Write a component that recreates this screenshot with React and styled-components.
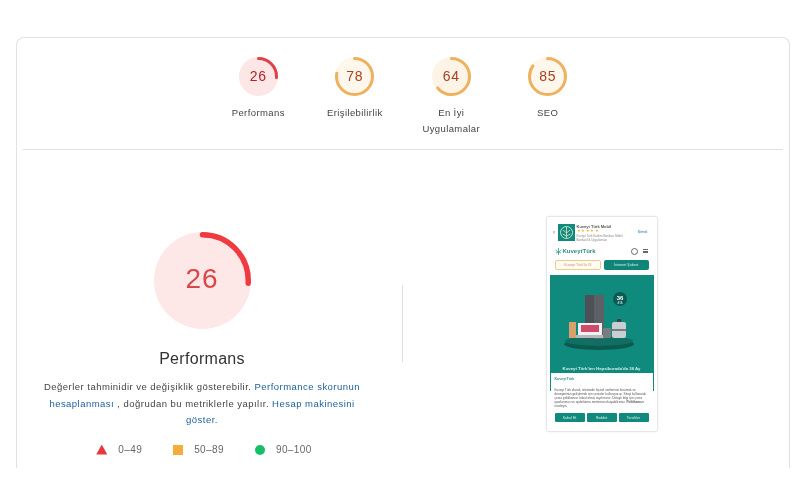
import React from 'react'
import styled, { createGlobalStyle } from 'styled-components'

const scores = [
  { value: 26, label: 'Performans', ring: '#e0404a', fill: '#fde6e6', text: '#b5232b' },
  { value: 78, label: 'Erişilebilirlik', ring: '#eeb25e', fill: '#fff6ec', text: '#a8421c' },
  { value: 64, label: 'En İyi Uygulamalar', ring: '#eeb25e', fill: '#fdf3e7', text: '#a8421c' },
  { value: 85, label: 'SEO', ring: '#eeb25e', fill: '#fff6ec', text: '#a8421c' },
]

const Gauge = ({ value, size, stroke, ring, fill }) => {
  const r = (size - stroke) / 2
  return (
    <GaugeSvg width={size} height={size} viewBox={`0 0 ${size} ${size}`}>
      <circle cx={size / 2} cy={size / 2} r={size / 2} fill={fill} />
      <circle
        cx={size / 2}
        cy={size / 2}
        r={r}
        fill="none"
        stroke={ring}
        strokeWidth={stroke}
        strokeLinecap="round"
        pathLength="100"
        strokeDasharray={`${value} 100`}
        transform={`rotate(-90 ${size / 2} ${size / 2})`}
      />
    </GaugeSvg>
  )
}

const PhonePreview = () => (
  <Phone>
    <Banner>
      <CloseMark>×</CloseMark>
      <AppIcon>
        <svg width="17" height="17" viewBox="0 0 17 17">
          <rect width="17" height="17" fill="#12897b" />
          <circle cx="8.5" cy="8.5" r="6" fill="none" stroke="#fff" strokeWidth="0.7" />
          <path d="M8.5 3v11M5 6l3.5 3 3.5-3M4.5 10l4 2 4-2" fill="none" stroke="#dfe9c8" strokeWidth="0.8" />
        </svg>
      </AppIcon>
      <BannerText>
        <AppName>Kuveyt Türk Mobil</AppName>
        <Stars>★★★★★</Stars>
        <AppNote>Kuveyt Türk Katılım Bankası Mobil Bankacılık Uygulaması</AppNote>
      </BannerText>
      <InstallLink>Şimdi</InstallLink>
    </Banner>

    <PhoneHeader>
      <Logo>
        <svg width="7" height="7" viewBox="0 0 7 7">
          <path d="M3.5 0v7M0.5 2l3 2 3-2M1 5l2.5-1L6 5" fill="none" stroke="#3a9c8e" strokeWidth="0.8" />
        </svg>
        KuveytTürk
      </Logo>
      <HeaderIcons>
        <SearchMark />
        <MenuMark />
      </HeaderIcons>
    </PhoneHeader>

    <Tabs>
      <OutlineTab>Kuveyt Türk'lü Ol</OutlineTab>
      <FilledTab>İnternet Şubesi</FilledTab>
    </Tabs>

    <Hero>
      <HeroArt>
        <svg width="104" height="89" viewBox="0 0 104 89">
          <ellipse cx="49" cy="69" rx="35" ry="6" fill="#0b5a50" />
          <ellipse cx="49" cy="66" rx="34" ry="5" fill="#116e62" />
          <rect x="35" y="20" width="19" height="44" rx="1" fill="#5d6166" />
          <rect x="35" y="20" width="9" height="44" fill="#4d5156" />
          <rect x="19" y="47" width="7" height="16" fill="#d9a06b" />
          <rect x="28" y="48" width="24" height="12" fill="#eef0f2" />
          <rect x="31" y="50" width="18" height="7" fill="#d14a6c" />
          <rect x="26" y="60" width="28" height="3" fill="#b4b9bd" />
          <rect x="53" y="53" width="8" height="10" rx="1" fill="#787d82" />
          <rect x="62" y="47" width="14" height="16" rx="2" fill="#c9ced2" />
          <rect x="62" y="54" width="14" height="2" fill="#777c80" />
          <rect x="67" y="44" width="4" height="3" fill="#3d4246" />
          <circle cx="70" cy="24" r="7" fill="#0a5c52" />
          <Badge x="70" y="25" textAnchor="middle">36</Badge>
          <BadgeNote x="70" y="28.5" textAnchor="middle">AYA</BadgeNote>
        </svg>
      </HeroArt>
      <HeroTitle>Kuveyt Türk'ten Hepsiburada'da 36 Ay</HeroTitle>
      <Notice>
        <NoticeLogo>KuveytTürk</NoticeLogo>
        <NoticeText>
          Kuveyt Türk olarak, sitemizde kişisel verilerinizi korumak ve deneyiminizi geliştirmek için
          çerezler kullanıyoruz. Siteyi kullanarak çerez politikamızı kabul etmiş sayılırsınız. Detaylı bilgi için
          çerez ayarlarımızı ve aydınlatma metnimizi okuyabilirsiniz. <b>Politikamızı</b> inceleyin.
        </NoticeText>
      </Notice>
    </Hero>

    <ActionRow>
      <ActionButton>Kabul Et</ActionButton>
      <ActionButton>Reddet</ActionButton>
      <ActionButton>Tercihler</ActionButton>
    </ActionRow>
  </Phone>
)

const App = () => (
  <>
    <GlobalStyle />
    <Page>
      <Card>
        <ScoreRow>
          {scores.map((s) => (
            <ScoreItem key={s.label}>
              <SmallGauge>
                <Gauge value={s.value} size={39} stroke={3} ring={s.ring} fill={s.fill} />
                <SmallValue $color={s.text}>{s.value}</SmallValue>
              </SmallGauge>
              <ScoreLabel>{s.label}</ScoreLabel>
            </ScoreItem>
          ))}
        </ScoreRow>
        <Rule />
        <Detail>
          <Summary>
            <BigGauge>
              <Gauge value={26} size={97} stroke={5.5} ring="#ef3b3f" fill="#fde8e7" />
              <BigValue>26</BigValue>
            </BigGauge>
            <SummaryTitle>Performans</SummaryTitle>
            <Description>
              Değerler tahminidir ve değişiklik gösterebilir. <DocLink>Performance skorunun hesaplanması</DocLink> , doğrudan bu
              metriklerle yapılır. <DocLink>Hesap makinesini göster.</DocLink>
            </Description>
            <Legend>
              <LegendItem>
                <Triangle />
                0–49
              </LegendItem>
              <LegendItem>
                <Square />
                50–89
              </LegendItem>
              <LegendItem>
                <Dot />
                90–100
              </LegendItem>
            </Legend>
          </Summary>
          <Separator />
          <PreviewColumn>
            <PhonePreview />
          </PreviewColumn>
        </Detail>
      </Card>
    </Page>
  </>
)

const GlobalStyle = createGlobalStyle`
  html, body {
    margin: 0;
    background: #fff;
  }
  body {
    font-family: "Liberation Sans", Arial, sans-serif;
    color: #333;
  }
`

const Page = styled.div`
  width: 800px;
  height: 485px;
  padding: 37px 10px 0 16px;
  box-sizing: border-box;
  overflow: hidden;
  filter: blur(0.25px);
`

const Card = styled.section`
  height: 431px;
  border: 1px solid #e2e2e2;
  border-bottom: none;
  border-radius: 8px 8px 0 0;
  overflow: hidden;
  box-sizing: border-box;
`

const ScoreRow = styled.div`
  display: flex;
  justify-content: center;
  padding-top: 19px;
  height: 92px;
`

const ScoreItem = styled.div`
  width: 96.5px;
  display: flex;
  flex-direction: column;
  align-items: center;
`

const GaugeSvg = styled.svg`
  display: block;
`

const SmallGauge = styled.div`
  position: relative;
  width: 39px;
  height: 39px;
`

const SmallValue = styled.span`
  position: absolute;
  inset: 0;
  padding-bottom: 1px;
  display: flex;
  align-items: center;
  justify-content: center;
  font-size: 14px;
  letter-spacing: 0.6px;
  color: ${(p) => p.$color};
`

const ScoreLabel = styled.div`
  margin-top: 9px;
  width: 76px;
  font-size: 9.5px;
  line-height: 16px;
  letter-spacing: 0.4px;
  text-align: center;
  color: #444;
`

const Rule = styled.div`
  height: 1px;
  margin: 0 6px;
  background: #e2e2e2;
`

const Detail = styled.div`
  display: flex;
  align-items: flex-start;
  margin: 0 6px;
`

const Summary = styled.div`
  width: 358px;
  padding-top: 82px;
  display: flex;
  flex-direction: column;
  align-items: center;
`

const BigGauge = styled.div`
  position: relative;
  width: 97px;
  height: 97px;
`

const BigValue = styled.span`
  position: absolute;
  inset: 0;
  padding-bottom: 4px;
  display: flex;
  align-items: center;
  justify-content: center;
  font-size: 28px;
  letter-spacing: 1px;
  color: #d8474a;
`

const SummaryTitle = styled.h2`
  margin: 20px 0 0;
  font-size: 16px;
  line-height: 20px;
  font-weight: 400;
  letter-spacing: 0.3px;
  color: #333;
`

const Description = styled.p`
  margin: 10px 0 0;
  width: 322px;
  font-size: 9.5px;
  line-height: 16.5px;
  letter-spacing: 0.47px;
  text-align: center;
  color: #444;
`

const DocLink = styled.span`
  color: #1a5f9c;
`

const Legend = styled.div`
  display: flex;
  gap: 31px;
  margin-top: 15px;
  padding-left: 4px;
`

const LegendItem = styled.div`
  display: flex;
  align-items: center;
  gap: 11px;
  font-size: 10px;
  line-height: 12px;
  letter-spacing: 0.4px;
  color: #666;
`

const Triangle = styled.span`
  width: 11px;
  height: 10px;
  background: #e8383c;
  clip-path: polygon(50% 0, 100% 100%, 0 100%);
`

const Square = styled.span`
  width: 10px;
  height: 10px;
  background: #f6ab3a;
`

const Dot = styled.span`
  width: 10px;
  height: 10px;
  border-radius: 50%;
  background: #16bf66;
`

const Separator = styled.div`
  width: 1px;
  height: 77px;
  margin: 135px 18px 0 21px;
  background: #e0e0e0;
`

const PreviewColumn = styled.div`
  flex: 1;
  padding: 66px 1px 0 0;
  display: flex;
  justify-content: center;
`

const Phone = styled.div`
  width: 112px;
  height: 216px;
  box-sizing: border-box;
  border: 1px solid #e6e6e6;
  border-radius: 2px;
  box-shadow: 0 0 2px rgba(0, 0, 0, 0.08);
  padding: 7px 3px 0;
  filter: blur(0.3px);
  overflow: hidden;
`

const Banner = styled.div`
  display: flex;
  align-items: flex-start;
  height: 19px;
  padding-left: 3px;
`

const CloseMark = styled.span`
  width: 5px;
  margin-top: 5px;
  font-size: 5px;
  line-height: 6px;
  color: #999;
`

const AppIcon = styled.div`
  width: 17px;
  height: 17px;
  flex: none;
`

const BannerText = styled.div`
  flex: 1;
  padding-left: 2px;
  display: flex;
  flex-direction: column;
`

const AppName = styled.span`
  font-size: 4px;
  line-height: 5px;
  font-weight: 700;
  color: #555;
`

const Stars = styled.span`
  font-size: 4px;
  line-height: 4.5px;
  letter-spacing: 0.5px;
  color: #f0b429;
`

const AppNote = styled.span`
  width: 48px;
  font-size: 3px;
  line-height: 4px;
  color: #888;
`

const InstallLink = styled.span`
  margin: 5px 6px 0 0;
  font-size: 4px;
  line-height: 5px;
  color: #2a7fa8;
`

const PhoneHeader = styled.div`
  display: flex;
  align-items: center;
  justify-content: space-between;
  height: 14px;
  margin-top: 1px;
  padding: 0 6px 0 5px;
`

const Logo = styled.span`
  display: flex;
  align-items: center;
  gap: 1px;
  font-size: 6px;
  font-weight: 700;
  color: #2f8f84;
`

const HeaderIcons = styled.div`
  display: flex;
  align-items: center;
  gap: 5px;
`

const SearchMark = styled.span`
  width: 5px;
  height: 5px;
  border: 0.7px solid #666;
  border-radius: 50%;
`

const MenuMark = styled.span`
  width: 5px;
  height: 4px;
  border-top: 1px solid #666;
  border-bottom: 1px solid #666;
  box-sizing: border-box;
  background: linear-gradient(#666, #666) center / 100% 1px no-repeat;
`

const Tabs = styled.div`
  display: flex;
  gap: 3px;
  margin-top: 2px;
  padding: 0 5px;
`

const Tab = styled.span`
  flex: 1;
  height: 10px;
  box-sizing: border-box;
  border-radius: 2px;
  display: flex;
  align-items: center;
  justify-content: center;
  font-size: 3.6px;
`

const OutlineTab = styled(Tab)`
  border: 0.7px solid #f0c98a;
  background: #fffaf2;
  color: #b99a6a;
`

const FilledTab = styled(Tab)`
  background: #0f8578;
  color: #d7efe9;
`

const Hero = styled.div`
  margin-top: 5px;
  height: 116px;
  background: #0f8a7c;
  display: flex;
  flex-direction: column;
  align-items: center;
`

const HeroArt = styled.div`
  height: 89px;
`

const Badge = styled.text`
  font-size: 6px;
  font-weight: 700;
  fill: #fff;
`

const BadgeNote = styled.text`
  font-size: 2.6px;
  fill: #cfe8e3;
`

const HeroTitle = styled.div`
  height: 9px;
  font-size: 4.3px;
  line-height: 9px;
  font-weight: 700;
  color: #d5efe9;
  white-space: nowrap;
`

const Notice = styled.div`
  width: 102px;
  height: 42px;
  flex: none;
  box-sizing: border-box;
  padding: 3px 4px 0;
  background: #fff;
`

const NoticeLogo = styled.div`
  font-size: 3.6px;
  line-height: 6px;
  font-weight: 700;
  color: #4a8f86;
`

const NoticeText = styled.p`
  margin: 6px 0 0;
  font-size: 3.1px;
  line-height: 4px;
  color: #555;
`

const ActionRow = styled.div`
  display: flex;
  gap: 2px;
  margin-top: 22px;
  padding: 0 5px;
`

const ActionButton = styled.span`
  flex: 1;
  height: 9px;
  border-radius: 1px;
  background: #0f8a7c;
  display: flex;
  align-items: center;
  justify-content: center;
  font-size: 3.6px;
  color: #d7efe9;
`

export default App
